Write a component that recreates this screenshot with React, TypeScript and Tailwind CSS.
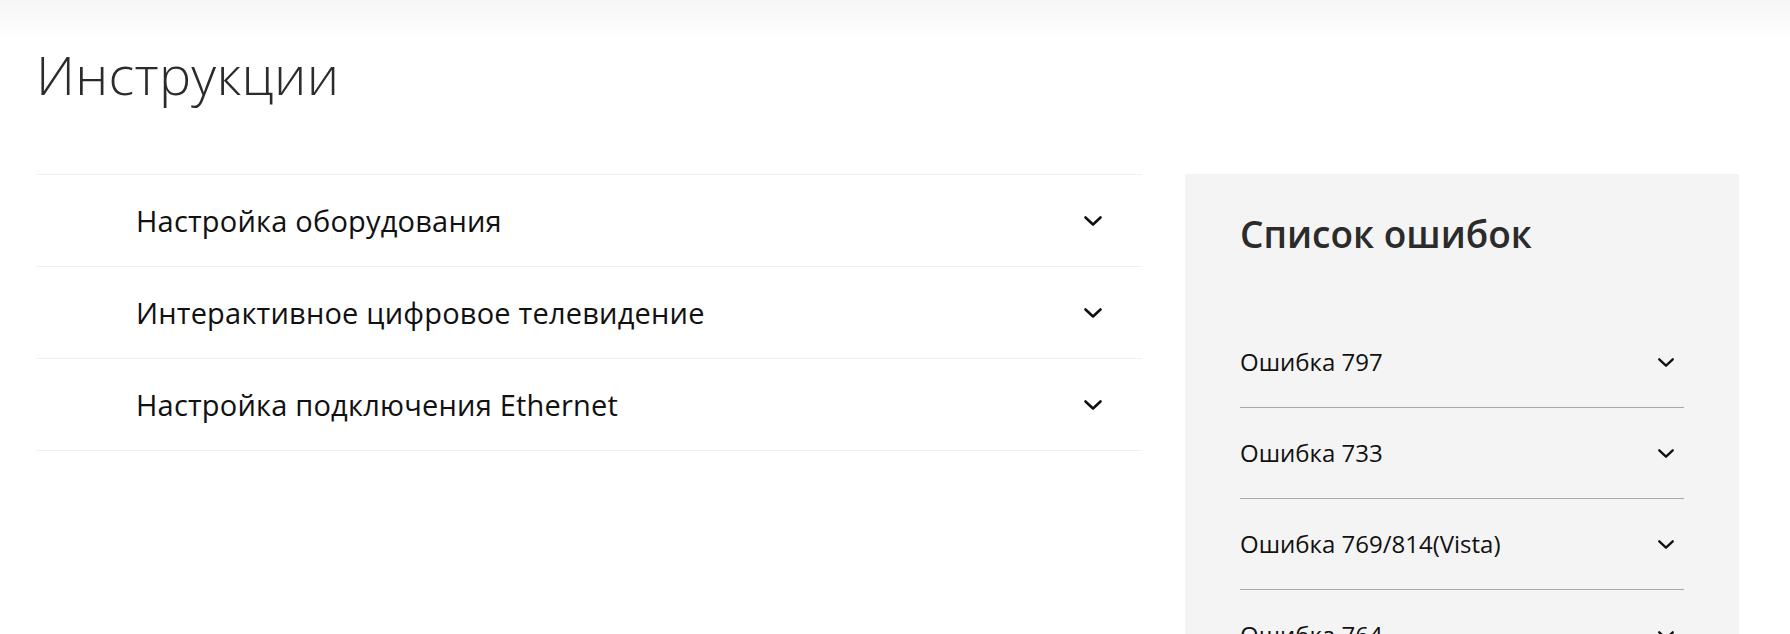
import React from 'react';

const instructions = [
  'Настройка оборудования',
  'Интерактивное цифровое телевидение',
  'Настройка подключения Ethernet',
];

const errors = ['Ошибка 797', 'Ошибка 733', 'Ошибка 769/814(Vista)', 'Ошибка 764'];

function Chevron({ className }: { className?: string }) {
  return (
    <svg viewBox="0 0 20 12" className={className} fill="none" stroke="currentColor" strokeWidth="2.6" strokeLinecap="round" strokeLinejoin="round">
      <path d="M2.5 2.5 L10 9.5 L17.5 2.5" />
    </svg>
  );
}

export default function App() {
  return (
    <div className="min-h-[634px] bg-white font-['Open_Sans',sans-serif] text-[#111] overflow-hidden">
      <div className="h-[42px] bg-gradient-to-b from-[#f6f6f6] to-white" />

      <div className="pl-[36px]">
        <h1 className="mt-[2px] text-[54px] leading-[60px] font-[350] tracking-[0.3px] text-[#2b2b2b]">
          Инструкции
        </h1>

        <div className="mt-[70px] flex gap-[43px]">
          <div className="w-[1106px] border-t border-[#f0f0f0]">
            {instructions.map((item) => (
              <div
                key={item}
                className="h-[92px] flex items-center justify-between border-b border-[#f0f0f0] pl-[100px] pr-[39px]"
              >
                <span className="text-[29px] tracking-[0.2px] text-[#111]">{item}</span>
                <Chevron className="w-[20px] h-[12px] text-[#111]" />
              </div>
            ))}
          </div>

          <div className="w-[554px] h-[460px] bg-[#f4f4f4] px-[55px] pt-[36px]">
            <h2 className="text-[37px] leading-[48px] font-semibold text-[#2b2b2b]">Список ошибок</h2>
            <div className="mt-[59px]">
              {errors.map((e) => (
                <div
                  key={e}
                  className="h-[91px] flex items-center justify-between border-b border-[#a8a8a8] pr-[9px]"
                >
                  <span className="text-[24px] text-[#111]">{e}</span>
                  <Chevron className="w-[18px] h-[11px] text-[#111]" />
                </div>
              ))}
            </div>
          </div>
        </div>
      </div>
    </div>
  );
}
